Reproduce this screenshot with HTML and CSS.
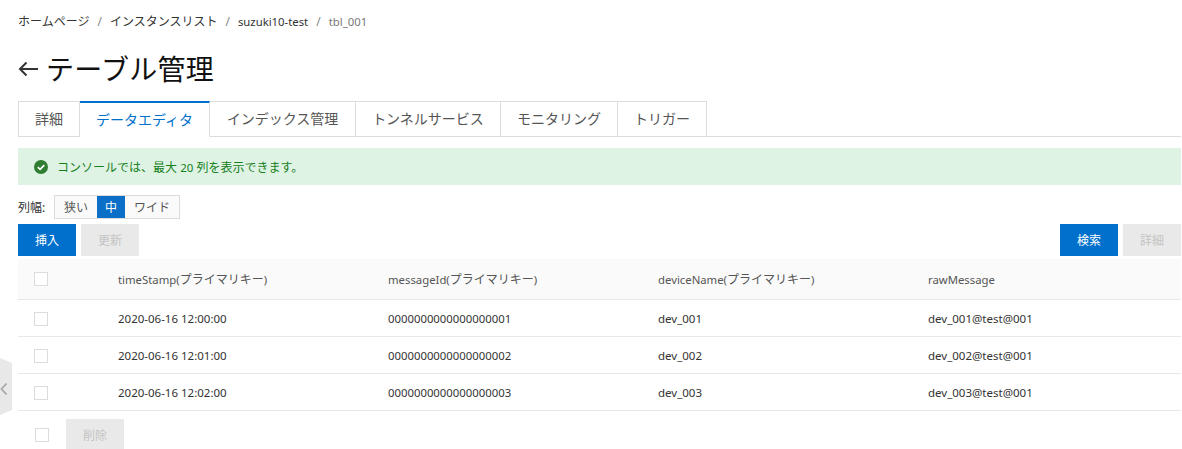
FILE: index.html
```html
<!DOCTYPE html>
<html lang="ja">
<head>
<meta charset="utf-8">
<title>テーブル管理</title>
<link rel="stylesheet" href="styles.css">
</head>
<body>
<div class="side-handle">
  <svg width="12" height="58" viewBox="0 0 12 58"><path d="M0 0L12 5V52L0 57Z" fill="#e8e8e8"/><path d="M6.500 25.500L1.500 31L6.500 36.500" fill="none" stroke="#a8a8a8" stroke-width="1.800"/></svg>
</div>
<main class="page">
  <nav class="crumbs">
    <a>ホームページ</a><span class="sep">/</span><a>インスタンスリスト</a><span class="sep">/</span><a class="lat">suzuki10-test</a><span class="sep">/</span><span class="current lat">tbl_001</span>
  </nav>
  <h1 class="title">
    <svg class="back" width="20" height="16" viewBox="0 0 20 16"><path d="M20 8H2M8.500 1.500L2 8L8.500 14.500" fill="none" stroke="#333" stroke-width="2"/></svg>
    <span>テーブル管理</span>
  </h1>
  <div class="tabs">
    <div class="tab t1">詳細</div>
    <div class="tab t2 active">データエディタ</div>
    <div class="tab t3">インデックス管理</div>
    <div class="tab t4">トンネルサービス</div>
    <div class="tab t5">モニタリング</div>
    <div class="tab t6">トリガー</div>
  </div>
  <div class="alert">
    <svg width="14" height="14" viewBox="0 0 14 14"><circle cx="7" cy="7" r="7" fill="#2f7d32"/><path d="M3.800 7.200L6.100 9.400L10.300 5.100" fill="none" stroke="#fff" stroke-width="1.700"/></svg>
    <span>コンソールでは、最大 <span class="cell">20</span> 列を表示できます。</span>
  </div>
  <div class="width-row">
    <span class="width-label">列幅:</span>
    <div class="seg">
      <span class="seg-item s1">狭い</span><span class="seg-item s2 on">中</span><span class="seg-item s3">ワイド</span>
    </div>
  </div>
  <div class="toolbar">
    <div class="group">
      <button class="btn primary">挿入</button>
      <button class="btn disabled">更新</button>
    </div>
    <div class="group">
      <button class="btn primary">検索</button>
      <button class="btn disabled">詳細</button>
    </div>
  </div>
  <table class="grid">
    <colgroup><col class="c0"><col class="c1"><col class="c1"><col class="c1"><col></colgroup>
    <thead>
      <tr><th><i class="check"></i></th><th><span class="lat">timeStamp(</span>プライマリキー<span class="lat">)</span></th><th><span class="lat">messageId(</span>プライマリキー<span class="lat">)</span></th><th><span class="lat">deviceName(</span>プライマリキー<span class="lat">)</span></th><th><span class="lat">rawMessage</span></th></tr>
    </thead>
    <tbody class="cell">
      <tr><td><i class="check"></i></td><td>2020-06-16 12:00:00</td><td class="lat">0000000000000000001</td><td>dev_001</td><td>dev_001@test@001</td></tr>
      <tr><td><i class="check"></i></td><td>2020-06-16 12:01:00</td><td class="lat">0000000000000000002</td><td>dev_002</td><td>dev_002@test@001</td></tr>
      <tr><td><i class="check"></i></td><td>2020-06-16 12:02:00</td><td class="lat">0000000000000000003</td><td>dev_003</td><td>dev_003@test@001</td></tr>
    </tbody>
  </table>
  <div class="footer-row">
    <i class="check"></i>
    <button class="btn disabled">削除</button>
  </div>
</main>
</body>
</html>
```
FILE: styles.css
```css
* { box-sizing: border-box; }
html, body { margin: 0; padding: 0; background: #fff; overflow: hidden; }
body { font-family: "Noto Sans", "Noto Sans CJK JP", sans-serif; font-size: 12px; color: #333; height: 449px; position: relative; }
.lat { font-size: 11.33px; }
.cell { font-size: 11.5px; }
.page { padding: 0 1px 0 18px; }
.side-handle { position: absolute; left: 0; top: 358px; width: 12px; height: 58px; }
.side-handle svg { display: block; }
.crumbs { height: 42px; padding-top: 13px; line-height: 17px; color: #333; white-space: nowrap; }
.crumbs .sep { margin: 0 8px; color: #888; }
.crumbs .current { color: #777; }
.title { margin: 0; height: 59px; display: flex; align-items: center; gap: 8px; font-size: 28px; font-weight: 400; color: #111; padding-bottom: 6px; line-height: 40px; letter-spacing: 0.3px; }
.back { display: block; flex: none; margin-left: 0; }
.tabs { display: flex; height: 36px; border-bottom: 1px solid #dcdcdc; }
.tab { height: 36px; border: 1px solid #dcdcdc; border-left: 0; font-size: 14px; line-height: 34px; text-align: center; color: #555; background: #fff; }
.t1 { width: 62px; border-left: 1px solid #dcdcdc; }
.t2 { width: 130px; }
.t3 { width: 146px; }
.t4 { width: 145px; }
.t5 { width: 117px; }
.t6 { width: 89px; }
.tab.active { color: #0070cc; border-top: 2px solid #0070cc; border-bottom-color: #fff; line-height: 33px; }
.alert { margin-top: 11px; height: 37px; background: #dff3e5; display: flex; align-items: center; gap: 9px; padding-left: 16px; color: #15801a; }
.alert svg { display: block; flex: none; }
.width-row { margin-top: 10px; height: 24px; display: flex; align-items: center; gap: 6px; }
.width-label { color: #333; width: 30px; }
.seg { display: flex; height: 24px; border: 1px solid #dcdcdc; background: #fafafa; }
.seg-item { line-height: 24px; text-align: center; color: #555; }
.s1 { width: 42px; }
.s2 { width: 28px; }
.s3 { width: 54px; }
.seg-item.on { background: #0c6fc7; color: #fff; }
.toolbar { margin-top: 5px; display: flex; justify-content: space-between; }
.group { display: flex; gap: 5px; }
.btn { width: 58px; height: 32px; border: 0; padding: 0; font: inherit; cursor: default; }
.btn.primary { background: #0070cc; color: #fff; }
.btn.disabled { background: #e9e9e9; color: #c4c4c4; }
.grid { width: 100%; margin-top: 3px; border-collapse: collapse; table-layout: fixed; }
.c0 { width: 100px; }
.c1 { width: 270px; }
.grid th { height: 40px; background: #fafafa; font-weight: 400; text-align: left; color: #555; border-bottom: 1px solid #e8e8e8; padding: 1px 0 0; }
.grid td { height: 37px; text-align: left; color: #333; border-bottom: 1px solid #e8e8e8; padding: 1px 0 0; }
.grid th:first-child { padding-left: 16px; }
.grid td:first-child { padding: 3px 0 0 16px; }
.check { display: block; width: 14px; height: 14px; border: 1px solid #dcdcdc; background: #fff; }
.footer-row { margin-top: 8px; display: flex; align-items: center; gap: 17px; padding-left: 17px; }
```
